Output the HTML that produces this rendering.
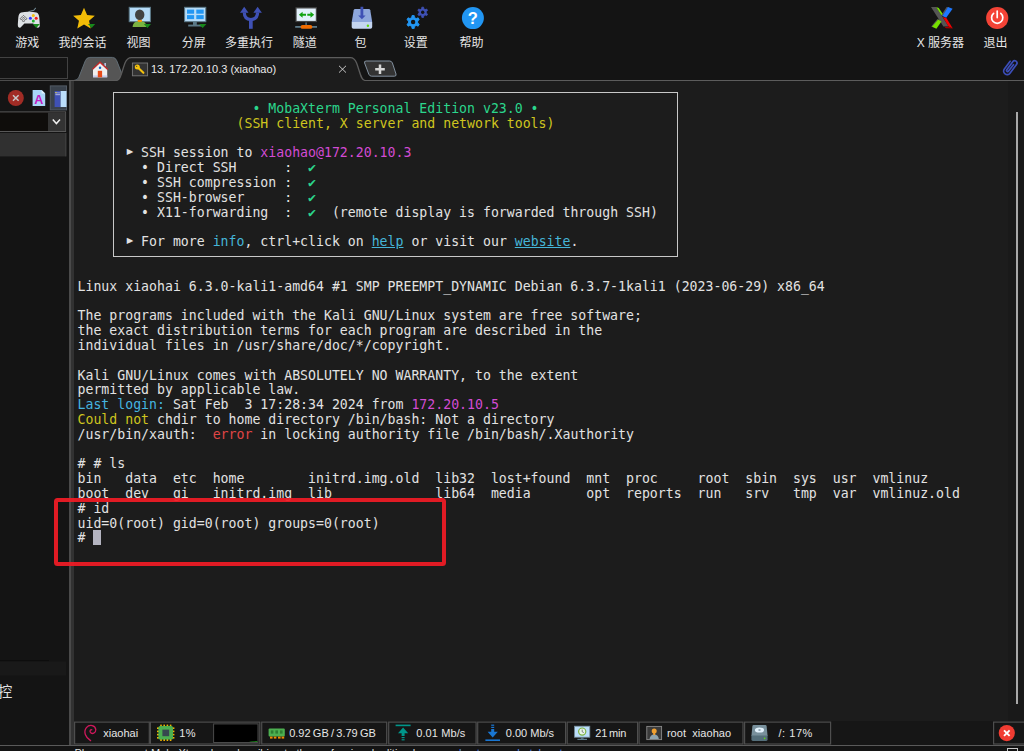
<!DOCTYPE html>
<html lang="zh">
<head>
<meta charset="utf-8">
<title>MobaXterm</title>
<style>
html,body{margin:0;padding:0;background:#141414;}
body{width:1024px;height:751px;position:relative;overflow:hidden;font-family:"Liberation Sans","Noto Sans CJK SC",sans-serif;}
.abs{position:absolute;}
#toolbar{position:absolute;left:0;top:0;width:1024px;height:81px;background:#141414;}
.tlabel{position:absolute;top:34.7px;height:17px;line-height:17px;font-size:12px;color:#e4e4e4;white-space:nowrap;text-align:center;transform:translateX(-50%);font-family:"Liberation Sans","Noto Sans CJK SC",sans-serif;}
.ticon{position:absolute;overflow:visible;}
#leftpanel{position:absolute;left:0;top:81px;width:69px;height:665px;background:#141414;}
#splitter{position:absolute;left:68.7px;top:81.3px;width:5.9px;height:665px;background:linear-gradient(90deg,#4a4a4a 0,#4a4a4a 2.5px,#323232 2.5px,#323232 100%);}
#term{position:absolute;left:74px;top:81px;width:934px;height:640px;background:#1c1c1c;}
#scroll{position:absolute;left:1008px;top:81px;width:16px;height:640px;background:#191919;}
#status{position:absolute;left:74px;top:721px;width:950px;height:25px;background:#161616;}
#bottom{position:absolute;left:0;top:744.7px;width:1024px;height:7px;background:#141414;border-top:1.3px solid #5a5a5a;overflow:hidden;}
.tl{position:absolute;left:77.4px;height:15px;line-height:15px;font-family:"DejaVu Sans Mono","Liberation Mono",monospace;font-size:13.2px;color:#e2e2e2;white-space:pre;}
.g{color:#2bd68c}.y{color:#cfc51f}.m{color:#d34bd3}.c{color:#45b5e0}.b{color:#45b5d8}.r{color:#e04545}
.u{text-decoration:underline}
#tt{position:absolute;left:3.5px;top:20.9px;letter-spacing:0.01px;margin:0;font-family:"DejaVu Sans Mono","Liberation Mono",monospace;font-size:13.2px;line-height:14.82px;color:#e2e2e2;white-space:pre;}
.cur{background:#b4b4c0;}
.tri{display:inline-block;transform:translate(0.9px,-1.7px) scale(0.8,1.2);}
.cell{position:absolute;top:722px;height:22px;border:1px solid #454545;box-sizing:border-box;background:#161616;}
.stxt{position:absolute;top:5px;height:14px;line-height:14px;font-size:11px;color:#e6e6e6;white-space:pre;font-family:"Liberation Sans",sans-serif;}
</style>
</head>
<body>
<div id="toolbar">
<svg class="abs" style="left:0;top:0" width="1024" height="81" viewBox="0 0 1024 81">
<path d="M28.3,12.4 C29.2,9.8 32.8,11.4 34.2,9.8 C35,8.8 35.2,8.2 35.9,7.9" fill="none" stroke="#6f8792" stroke-width="1.1"/>
<path d="M21.2,12.6 Q18.8,13.2 18.3,17.5 L17.8,24.5 Q17.8,28.2 20.6,27.6 L24.4,23.6 L33.2,23.6 L37,27.6 Q39.9,28.2 39.8,24.5 L39.3,17.5 Q38.8,13.2 36.4,12.6 Q33,11.6 28.8,11.7 Q24.6,11.6 21.2,12.6Z" fill="#dde1e4"/>
<g fill="#e8ebed" stroke="#3a3a3a" stroke-width="0.7"><path d="M23.5,15.4 L24.7,16.6 L23.5,17.8 L22.3,16.6Z"/><path d="M23.5,19.6 L24.7,20.8 L23.5,22 L22.3,20.8Z"/><path d="M21.3,17.5 L22.5,18.7 L21.3,19.9 L20.1,18.7Z"/><path d="M25.7,17.5 L26.9,18.7 L25.7,19.9 L24.5,18.7Z"/></g>
<circle cx="33.3" cy="15.6" r="1.5" fill="#f4c20d"/><circle cx="30.4" cy="18.3" r="1.5" fill="#2a36ff"/><circle cx="36.2" cy="18.3" r="1.5" fill="#f21b1b"/><circle cx="33.3" cy="21" r="1.5" fill="#1fb22c"/>
<path d="M32.7,23.9 L39.9,23.9 L36.3,27.9Z" fill="#17881b"/>
<path d="M84.00,7.80 L87.12,14.91 L94.84,15.68 L89.04,20.84 L90.70,28.42 L84.00,24.50 L77.30,28.42 L78.96,20.84 L73.16,15.68 L80.88,14.91Z" fill="#f2bc07"/>
<path d="M88,23.9 L95.2,23.9 L91.6,27.9Z" fill="#17881b"/>
<rect x="129.2" y="7.3" width="21.2" height="14.4" fill="#b5dbf8" stroke="#5b7887" stroke-width="1"/>
<path d="M132.6,27 Q132.8,22.4 136.5,21.4 L143,21.4 Q146.4,22.4 146.6,27Z" fill="#7cb342"/>
<rect x="137.6" y="19.6" width="4.4" height="2.4" rx="1" fill="#ff9800"/>
<ellipse cx="139.7" cy="14.8" rx="4.7" ry="5.3" fill="#424242"/>
<path d="M143.8,23.9 L151,23.9 L147.4,27.9Z" fill="#17881b"/>
<rect x="193" y="22" width="3.8" height="3.4" fill="#5b7887"/><rect x="188.2" y="24.6" width="14" height="1.9" fill="#5b7887"/>
<rect x="184.6" y="7.3" width="21.2" height="14.4" fill="#b5dbf8" stroke="#5b7887" stroke-width="1"/>
<g fill="#2196f3"><rect x="187" y="9.6" width="7.1" height="4.1"/><rect x="196.3" y="9.6" width="7.4" height="4.1"/><rect x="187" y="15.1" width="7.1" height="4"/><rect x="196.3" y="15.1" width="7.4" height="4"/></g>
<path d="M199,23.9 L206.4,23.9 L202.7,27.9Z" fill="#17881b"/>
<g fill="#3f51b5"><rect x="249" y="18" width="3.7" height="10.8"/><path d="M244.2,6.8 L248.5,12.8 L240,12.8Z"/><path d="M257.6,6.8 L261.9,12.8 L253.4,12.8Z"/></g>
<path d="M244.3,12.5 Q244.3,19.2 250.85,19.6 Q257.5,19.2 257.6,12.5" fill="none" stroke="#3f51b5" stroke-width="3.2"/>
<rect x="295.2" y="26" width="21.8" height="1.8" fill="#5b7887"/><rect x="305.4" y="22.4" width="1.4" height="3" fill="#5b7887"/>
<rect x="300.6" y="24.9" width="11.7" height="3.9" rx="1.9" fill="#f06c00"/>
<rect x="296" y="7.9" width="20.4" height="13.6" fill="#e3f1fc" stroke="#454545" stroke-width="1.2"/>
<path d="M298.9,14.8 L302.6,11.8 L302.6,13.8 L306,13.8 L306,15.8 L302.6,15.8 L302.6,17.8Z" fill="#12a312"/>
<path d="M314.2,14.8 L310.5,11.8 L310.5,13.8 L307.3,13.8 L307.3,15.8 L310.5,15.8 L310.5,17.8Z" fill="#12a312"/>
<path d="M355.2,9 L368.8,9 Q370,9 370.3,10.2 L372.2,22 L351.7,22 L353.7,10.2 Q354,9 355.2,9Z" fill="#8ea7dc"/>
<path d="M351.7,22 L372.2,22 L372.2,27 Q372.2,28.8 370.4,28.8 L353.5,28.8 Q351.7,28.8 351.7,27Z" fill="#c5d6f1"/>
<circle cx="367.9" cy="25.8" r="1.2" fill="#5fd80a"/>
<path d="M360.5,6.8 L363.3,6.8 L363.3,15.4 L365.6,15.4 L361.9,19.2 L358.2,15.4 L360.5,15.4Z" fill="#3f51b5"/>
<path d="M414.49,26.44 L414.19,28.46 L412.01,28.46 L411.71,26.44 L409.95,25.42 L408.05,26.18 L406.96,24.28 L408.56,23.01 L408.56,20.99 L406.96,19.72 L408.05,17.82 L409.95,18.58 L411.71,17.56 L412.01,15.54 L414.19,15.54 L414.49,17.56 L416.25,18.58 L418.15,17.82 L419.24,19.72 L417.64,20.99 L417.64,23.01 L419.24,24.28 L418.15,26.18 L416.25,25.42Z" fill="#2196f3" stroke="#2196f3" stroke-width="0.9" stroke-linejoin="round"/>
<circle cx="413.1" cy="22" r="2.2" fill="#141414"/>
<path d="M423.79,15.78 L423.57,17.43 L421.83,17.43 L421.61,15.78 L420.23,14.99 L418.69,15.61 L417.83,14.11 L419.14,13.10 L419.14,11.50 L417.83,10.49 L418.69,8.99 L420.23,9.61 L421.61,8.82 L421.83,7.17 L423.57,7.17 L423.79,8.82 L425.17,9.61 L426.71,8.99 L427.57,10.49 L426.26,11.50 L426.26,13.10 L427.57,14.11 L426.71,15.61 L425.17,14.99Z" fill="#3f51b5" stroke="#3f51b5" stroke-width="0.8" stroke-linejoin="round"/>
<circle cx="422.7" cy="12.3" r="1.7" fill="#141414"/>
<circle cx="472.9" cy="18.1" r="11" fill="#2196f3"/>
<text x="472.9" y="24" font-family="Liberation Sans, sans-serif" font-weight="bold" font-size="16.5" fill="#fff" text-anchor="middle">?</text>
<path d="M931,7 L936.2,7 L948.6,26.5 L943.4,26.5Z" fill="#555"/>
<path d="M937.4,19 L931.2,26.4 L932.4,27 L938.6,19.6Z" fill="#555"/><path d="M946.6,7 L948.2,7 L942.6,16.2 L941.2,15.2Z" fill="#555"/>
<path d="M936.2,7 L938.8,8 L942.6,13.8 L941.4,15.2Z" fill="#76e000"/>
<path d="M938.2,19.4 L941.4,21.6 L936.4,28.8 L932,26.8Z" fill="#76e000"/>
<path d="M948,7 L952.6,8.8 L946.2,17.8 L942.4,16Z" fill="#1e78ff"/>
<path d="M942.8,17 L946.4,18 L952.8,28.4 L948.6,26.5Z" fill="#f20000"/>
<path d="M944.6,27 L948.6,26.5 L952.8,28.4 L946,28.2Z" fill="#a00000"/>
<circle cx="997.2" cy="18" r="11.1" fill="#f44336"/>
<path d="M993.6,13.4 A5.6,5.6 0 1 0 1000.8,13.4" fill="none" stroke="#fff" stroke-width="1.7" stroke-linecap="round"/>
<path d="M997.2,11 L997.2,17.6" stroke="#fff" stroke-width="1.7" stroke-linecap="round"/>
<path d="M4.7,-3.5 L-4.9,-3.5 A3.5,3.5 0 0 0 -4.9,3.5 L6,3.5 A2.33,2.33 0 0 0 6,-1.16 L-4,-1.16 A1.16,1.16 0 0 0 -4,1.16 L4,1.16" fill="none" stroke="#3c4eb9" stroke-width="1.7" stroke-linecap="round" transform="matrix(0.6 -0.8 0.8 0.6 1010.1 67.15)"/>
</svg>
<div class="tlabel" style="left:27.35px">游戏</div>
<div class="tlabel" style="left:82.50px">我的会话</div>
<div class="tlabel" style="left:138.45px">视图</div>
<div class="tlabel" style="left:193.75px">分屏</div>
<div class="tlabel" style="left:249.05px">多重执行</div>
<div class="tlabel" style="left:304.75px">隧道</div>
<div class="tlabel" style="left:360.50px">包</div>
<div class="tlabel" style="left:415.70px">设置</div>
<div class="tlabel" style="left:471.50px">帮助</div>
<div class="tlabel" style="left:940.45px">X 服务器</div>
<div class="tlabel" style="left:995.50px">退出</div>
</div>
<div id="tabs">
<div class="abs" style="left:-2px;top:57.4px;width:70.3px;height:21.4px;border:1px solid #424242;box-sizing:border-box;background:#141414"></div>
<svg class="abs" style="left:0;top:50px" width="1024" height="36" viewBox="0 50 1024 36">
<rect x="0" y="81.3" width="1024" height="5" fill="#141414" opacity="0"/>
<path d="M73.6,80.6 Q77.6,80.5 78.9,77.2 L85.4,60.6 Q86.7,57.4 89.8,57.4 L112.4,57.4 Q115.4,57.4 116.7,60.6 L123.2,77.2 Q124.5,80.5 128.5,80.6Z" fill="#555" stroke="#65737c" stroke-width="0.9"/>
<path d="M0,80.7 L116.5,80.7 C120.5,80.7 121.6,72 125,63 C126.8,58.6 128.6,57.6 131.4,57.6 L350.4,57.6 C353.2,57.6 354.8,58.6 356.6,63 C360,72 361,80.7 365,80.7 L1024,80.7 L1024,86 L0,86Z" fill="#1c1c1c"/>
<path d="M69,80.7 L116.5,80.7 C120.5,80.7 121.6,72 125,63 C126.8,58.6 128.6,57.6 131.4,57.6 L350.4,57.6 C353.2,57.6 354.8,58.6 356.6,63 C360,72 361,80.7 365,80.7 L1024,80.7" fill="none" stroke="#5c5c5c" stroke-width="1.3"/>
<path d="M0,80.7 L69,80.7" stroke="#4c4c4c" stroke-width="1.3"/>
<!-- home icon -->
<rect x="104.4" y="63" width="1.5" height="3.4" fill="#c5cae9"/>
<path d="M93,69.4 L100,62.6 L107.2,69.4 L107.2,77.3 L93,77.3Z" fill="#efefef"/>
<rect x="93" y="75.4" width="14.2" height="1.9" fill="#c5cae9"/>
<rect x="97.8" y="70.8" width="4.3" height="6.5" fill="#e64a19"/>
<circle cx="100" cy="67.7" r="1.25" fill="#1565c0"/>
<path d="M92.4,69.4 L100,62.2 L107.8,69.4" fill="none" stroke="#c62828" stroke-width="1.3" stroke-linejoin="miter"/>
<!-- key icon -->
<rect x="132.4" y="63" width="15.2" height="12.8" fill="#333" stroke="#787878" stroke-width="0.9"/>
<circle cx="137.3" cy="67" r="2.5" fill="#f4c20d"/>
<path d="M138.4,68 L143.4,72.8" stroke="#f4c20d" stroke-width="2.1" stroke-linecap="round"/>
<circle cx="136.7" cy="66.3" r="0.6" fill="#333"/>
<!-- close x -->
<path d="M339,65.8 L346,72.6 M346,65.8 L339,72.6" stroke="#d8d8d8" stroke-width="0.9"/>
<!-- new tab -->
<path d="M366.2,61 L389.6,61 Q391.6,61 392.4,63 L396,74 Q396.6,76.2 394.4,76.2 L371.6,76.2 Q369.6,76.2 368.8,74.2 L364.6,63 Q364,61 366.2,61Z" fill="#333" stroke="#8c9cac" stroke-width="0.9"/>
<path d="M380,64.4 L380,74 M375.2,69.2 L384.8,69.2" stroke="#d6d6d6" stroke-width="2.5"/>
</svg>
<div class="abs" style="left:150.9px;top:61.9px;height:14px;line-height:14px;font-size:11px;color:#ebebeb;white-space:pre;font-family:'Liberation Sans',sans-serif" id="tabtxt">13. 172.20.10.3 (xiaohao)</div>
</div>
<div id="leftpanel">
<svg class="abs" style="left:0;top:0" width="69" height="665" viewBox="0 81 69 665">
<rect x="0" y="81" width="69" height="665" fill="#141414"/>
<!-- red x -->
<circle cx="15.8" cy="98" r="8" fill="#a12c25"/>
<path d="M13,95.2 L18.6,100.8 M18.6,95.2 L13,100.8" stroke="#c8c8c8" stroke-width="1.5"/>
<!-- A doc -->
<path d="M32.6,90 L41.6,90 L45.2,93.6 L45.2,106 L32.6,106Z" fill="#a9d5f7"/>
<path d="M41.6,90 L45.2,93.6 L41.6,93.6Z" fill="#e3f2fd"/>
<text x="38.8" y="104.4" font-family="Liberation Sans, sans-serif" font-weight="bold" font-size="12.5" fill="#c21cc2" text-anchor="middle">A</text>
<!-- selected button -->
<rect x="50.3" y="85.9" width="16.2" height="24" fill="#3a424c" stroke="#525a64" stroke-width="1"/>
<rect x="54.6" y="91" width="6" height="16" fill="#3f51b5"/>
<rect x="60.6" y="91" width="5.9" height="16" fill="#bbdefb"/>
<rect x="55.4" y="92" width="1.2" height="1.2" fill="#ffeb3b"/><rect x="57" y="92" width="3" height="1" fill="#7986cb"/><rect x="55.4" y="93.6" width="4.6" height="1.6" fill="#9fa8da"/>
<!-- combo -->
<rect x="-2" y="111.9" width="67.6" height="19.6" fill="#0f0d0b" stroke="#585858" stroke-width="1"/>
<rect x="48" y="112.4" width="17.1" height="18.6" fill="#333"/>
<path d="M52.8,119.6 L56.4,123.6 L60,119.6" fill="none" stroke="#f0f0f0" stroke-width="1.5"/>
<!-- list header -->
<rect x="0" y="133" width="66" height="23.4" fill="#303030"/>
<rect x="65.4" y="133" width="1" height="23.4" fill="#454545"/>
<!-- lower items -->
<rect x="0" y="660.4" width="49" height="1" fill="#0a0a0a"/>
<rect x="0" y="661.4" width="66" height="14" fill="#191919"/>
</svg>
<div class="abs" id="jk" style="left:-16.2px;top:601px;height:20px;line-height:20px;font-size:14.3px;color:#e0e0e0;white-space:nowrap;font-family:'Liberation Sans','Noto Sans CJK SC',sans-serif">监控</div>
</div>
<div id="splitter"></div>
<div id="term">
<div class="abs" style="left:39px;top:10.7px;width:564.7px;height:165px;border:1.6px solid #c8c8c8;box-sizing:border-box;"></div>
<pre id="tt">
<span class="g">                      • MobaXterm Personal Edition v23.0 •</span>
<span class="y">                    (SSH client, X server and network tools)</span>

      <span class="tri">►</span> SSH session to <span class="m">xiaohao@172.20.10.3</span>
        • Direct SSH      :  <span class="g">✔</span>
        • SSH compression :  <span class="g">✔</span>
        • SSH-browser     :  <span class="g">✔</span>
        • X11-forwarding  :  <span class="g">✔</span>  (remote display is forwarded through SSH)

      <span class="tri">►</span> For more <span class="b">info</span>, ctrl+click on <span class="b u">help</span> or visit our <span class="b u">website</span>.


Linux xiaohai 6.3.0-kali1-amd64 #1 SMP PREEMPT_DYNAMIC Debian 6.3.7-1kali1 (2023-06-29) x86_64

The programs included with the Kali GNU/Linux system are free software;
the exact distribution terms for each program are described in the
individual files in /usr/share/doc/*/copyright.

Kali GNU/Linux comes with ABSOLUTELY NO WARRANTY, to the extent
permitted by applicable law.
<span class="c">Last login:</span> Sat Feb  3 17:28:34 2024 from <span class="m">172.20.10.5</span>
<span class="y">Could not</span> chdir to home directory /bin/bash: Not a directory
/usr/bin/xauth:  <span class="r">error</span> in locking authority file /bin/bash/.Xauthority

# # ls
bin   data  etc  home        initrd.img.old  lib32  lost+found  mnt  proc     root  sbin  sys  usr  vmlinuz
boot  dev   gi   initrd.img  lib             lib64  media       opt  reports  run   srv   tmp  var  vmlinuz.old
# id
uid=0(root) gid=0(root) groups=0(root)
# <span class="cur"> </span>
</pre>
</div>
<div id="scroll"><div class="abs" style="left:8.2px;top:31px;width:1.5px;height:592px;background:#a8a8a8"></div></div>
<div id="status">
<svg class="abs" style="left:-74px;top:0" width="1024" height="25" viewBox="0 721 1024 25">
<rect x="74" y="721" width="950" height="25" fill="#161616"/>
<rect x="74.6" y="722.1" width="74.7" height="21.9" fill="#161616" stroke="#4e4e4e" stroke-width="1.2"/>
<rect x="150.4" y="722.1" width="109.4" height="21.9" fill="#161616" stroke="#4e4e4e" stroke-width="1.2"/>
<rect x="261.7" y="722.1" width="125.0" height="21.9" fill="#161616" stroke="#4e4e4e" stroke-width="1.2"/>
<rect x="388.7" y="722.1" width="87.4" height="21.9" fill="#161616" stroke="#4e4e4e" stroke-width="1.2"/>
<rect x="477.7" y="722.1" width="87.9" height="21.9" fill="#161616" stroke="#4e4e4e" stroke-width="1.2"/>
<rect x="567.2" y="722.1" width="70.4" height="21.9" fill="#161616" stroke="#4e4e4e" stroke-width="1.2"/>
<rect x="639.1" y="722.1" width="103.9" height="21.9" fill="#161616" stroke="#4e4e4e" stroke-width="1.2"/>
<rect x="744.6" y="722.1" width="86.0" height="21.9" fill="#161616" stroke="#4e4e4e" stroke-width="1.2"/>
<rect x="993.6" y="722.1" width="32.4" height="21.9" fill="#161616" stroke="#4e4e4e" stroke-width="1.2"/>
<path d="M90.6,740.6 C85.4,737.6 83.2,731.6 86.4,727.6 C89.6,723.8 95.4,725.2 95.8,729.6 C96,733 92,734.6 90.4,732.4 C89.4,730.8 90.6,729.4 91.8,729.8" fill="none" stroke="#d0185c" stroke-width="1.3" stroke-linecap="round"/>
<g fill="#f0b400">
<rect x="160.2" y="724.6" width="1.6" height="16.4"/>
<rect x="157" y="727.4" width="17.4" height="1.6"/>
<rect x="163.4" y="724.6" width="1.6" height="16.4"/>
<rect x="157" y="730.6" width="17.4" height="1.6"/>
<rect x="166.6" y="724.6" width="1.6" height="16.4"/>
<rect x="157" y="733.8" width="17.4" height="1.6"/>
<rect x="169.8" y="724.6" width="1.6" height="16.4"/>
<rect x="157" y="737.0" width="17.4" height="1.6"/>
</g>
<rect x="158.4" y="726" width="14.6" height="13.6" rx="1.6" fill="#4caf50"/><rect x="162.4" y="729.6" width="6.8" height="6.6" fill="#37474f"/>
<rect x="213.6" y="723.9" width="44.4" height="18.6" fill="#000" stroke="#4a4a4a" stroke-width="1"/>
<path d="M249,742 L257.4,742 L257.4,741 L251,741.6Z" fill="#1a8a1a"/>
<rect x="268.6" y="728.4" width="16.2" height="8" rx="1" fill="#4caf50"/>
<g fill="#2e7d32"><rect x="270.8" y="730.4" width="2.6" height="3.2"/><rect x="275.4" y="730.4" width="2.6" height="3.2"/><rect x="280" y="730.4" width="2.6" height="3.2"/></g>
<g fill="#ef8c00"><rect x="270" y="736.6" width="2.6" height="2"/><rect x="273.8" y="736.6" width="2.6" height="2"/><rect x="278" y="736.6" width="2.6" height="2"/><rect x="281.6" y="736.6" width="2.6" height="2"/></g>
<g fill="#00968a"><rect x="395.6" y="724.6" width="15" height="1.6"/><path d="M403.1,727.4 L408.2,733.2 L404.6,733.2 L404.6,736 L401.6,736 L401.6,733.2 L398,733.2Z"/><rect x="401.6" y="737" width="3" height="1.2"/><rect x="401.6" y="739.2" width="3" height="1.2"/></g>
<g fill="#1976d2"><rect x="485.4" y="739.4" width="14.6" height="1.6"/><path d="M492.7,737.6 L497.8,731.8 L494.2,731.8 L494.2,729 L491.2,729 L491.2,731.8 L487.6,731.8Z"/><rect x="491.2" y="726.8" width="3" height="1.2"/><rect x="491.2" y="724.6" width="3" height="1.2"/></g>
<rect x="574.6" y="726.2" width="15.2" height="11" fill="#bbdefb" stroke="#78909c" stroke-width="0.8"/><rect x="580.8" y="737.2" width="2.8" height="1.6" fill="#607d8b"/><rect x="577.4" y="738.8" width="9.6" height="1.2" fill="#607d8b"/>
<circle cx="582.2" cy="731.6" r="3.6" fill="#e8f5e9" stroke="#7cb342" stroke-width="1.2"/><path d="M582.2,729.6 L582.2,731.8 L583.8,732.6" fill="none" stroke="#555" stroke-width="0.7"/>
<rect x="646.8" y="726.4" width="14.8" height="13.2" fill="#3a3a3a" stroke="#8a8a8a" stroke-width="0.9"/>
<circle cx="654.2" cy="731" r="2.5" fill="#f0a030"/><path d="M649.6,739 Q650,734.6 654.2,734.4 Q658.4,734.6 658.8,739Z" fill="#90a4ae"/><rect x="653.2" y="733" width="2" height="2" fill="#f0a030"/>
<path d="M753.6,725 L765.4,725 Q766.4,725 766.6,726 L767.6,736 L751.4,736 L752.4,726 Q752.6,725 753.6,725Z" fill="#78909c"/><path d="M751.4,735.6 L767.6,735.6 L767.6,739.6 Q767.6,741 766.2,741 L752.8,741 Q751.4,741 751.4,739.6Z" fill="#546e7a"/>
<ellipse cx="759.5" cy="730" rx="4.6" ry="2.6" fill="#e3f2fd"/><ellipse cx="759.5" cy="730" rx="1.3" ry="0.8" fill="#78909c"/><circle cx="764.6" cy="738.4" r="0.8" fill="#5fd80a"/>
<circle cx="1006.8" cy="733.1" r="8.1" fill="#f13c32"/><path d="M1004,730.3 L1009.6,735.9 M1009.6,730.3 L1004,735.9" stroke="#fff" stroke-width="1.9"/>
</svg>
<div class="stxt" style="left:29.3px">xiaohai</div>
<div class="stxt" style="left:105.3px;letter-spacing:0.4px">1%</div>
<div class="stxt" style="left:215.2px;word-spacing:-0.8px">0.92 GB / 3.79 GB</div>
<div class="stxt" style="left:342.2px;letter-spacing:0.1px">0.01 Mb/s</div>
<div class="stxt" style="left:431.8px">0.00 Mb/s</div>
<div class="stxt" style="left:521.3px;word-spacing:-1px;letter-spacing:-0.2px">21 min</div>
<div class="stxt" style="left:592.9px;letter-spacing:0.05px">root  xiaohao</div>
<div class="stxt" style="left:704.4px;letter-spacing:0.55px">/: 17%</div>
</div>
<div id="redbox" class="abs" style="left:53.7px;top:497.6px;width:392.6px;height:68.4px;border:4.4px solid rgba(238,28,37,0.94);border-radius:3.5px;box-sizing:border-box;"></div>
<div id="bottom"><div class="abs" style="left:74.5px;top:1.7px;font-size:11px;line-height:13px;color:#dcdcdc;white-space:pre;font-family:'Liberation Sans',sans-serif">Please support MobaXterm by subscribing to the professional edition here:  <span style="color:#5b8def">mobaxterm.mobatek.net</span></div><div class="abs" style="left:1007px;top:2.4px;width:10.5px;height:6px;border:1px solid #c8c8c8;box-sizing:border-box;background:#141414"></div></div>
</body>
</html>
